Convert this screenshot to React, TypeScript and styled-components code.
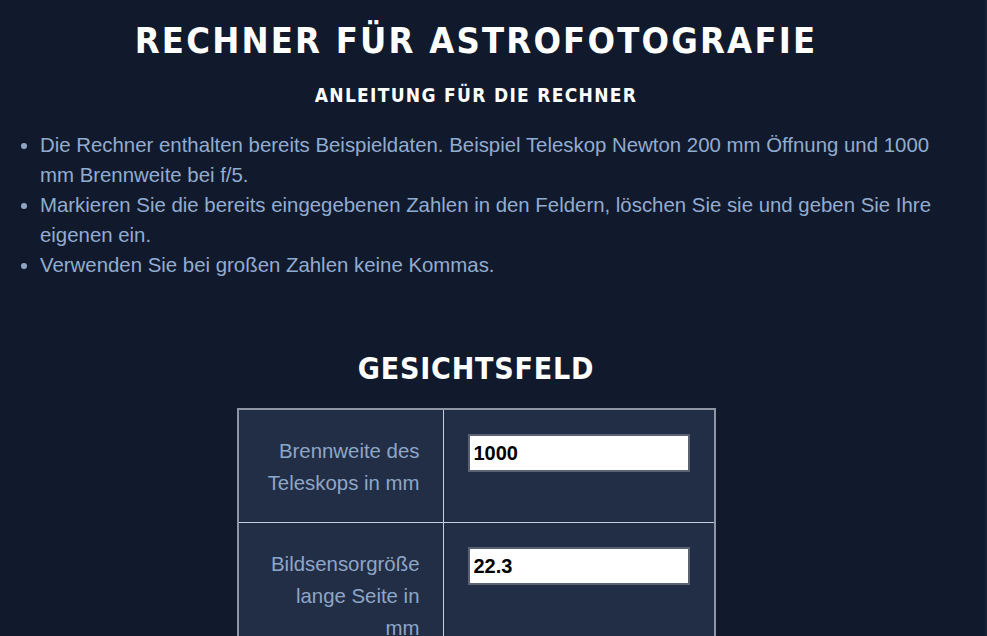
import styled, { createGlobalStyle } from 'styled-components';

const GlobalStyle = createGlobalStyle`
  html, body {
    margin: 0;
    padding: 0;
    background: #111a2c;
  }
  body {
    font-family: "Liberation Sans", Arial, sans-serif;
    overflow: hidden;
  }
`;

const rows = [
  { label: 'Brennweite des Teleskops in mm', value: '1000' },
  { label: 'Bildsensorgröße lange Seite in mm', value: '22.3' },
];

const App = () => {
  return (
    <Page>
      <GlobalStyle />
      <Content>
        <Title>Rechner für Astrofotografie</Title>
        <SubTitle>Anleitung für die Rechner</SubTitle>
        <Hints>
          <li>
            Die Rechner enthalten bereits Beispieldaten. Beispiel Teleskop Newton 200 mm Öffnung und 1000
            mm Brennweite bei f/5.
          </li>
          <li>
            Markieren Sie die bereits eingegebenen Zahlen in den Feldern, löschen Sie sie und geben Sie Ihre
            eigenen ein.
          </li>
          <li>Verwenden Sie bei großen Zahlen keine Kommas.</li>
        </Hints>
        <SectionTitle>Gesichtsfeld</SectionTitle>
        <CalcTable>
          <tbody>
            {rows.map((row) => (
              <tr key={row.label}>
                <LabelCell>{row.label}</LabelCell>
                <InputCell>
                  <NumberInput type="text" defaultValue={row.value} />
                </InputCell>
              </tr>
            ))}
          </tbody>
        </CalcTable>
      </Content>
    </Page>
  );
};

const Page = styled.div`
  height: 636px;
  background: #111a2c;
  border-right: 2px solid #16223a;
  box-sizing: border-box;
`;

const Content = styled.div`
  width: 952px;
  display: flex;
  flex-direction: column;
  align-items: center;
  padding-top: 20px;
`;

const Title = styled.h1`
  margin: 0;
  font-family: "DejaVu Sans Condensed", "DejaVu Sans", sans-serif;
  font-weight: bold;
  font-size: 36px;
  line-height: 42px;
  letter-spacing: 2.2px;
  text-transform: uppercase;
  color: #ffffff;
`;

const SubTitle = styled.h2`
  margin: 21px 0 0;
  font-family: "DejaVu Sans Condensed", "DejaVu Sans", sans-serif;
  font-weight: bold;
  font-size: 19px;
  line-height: 24px;
  letter-spacing: 1.3px;
  text-transform: uppercase;
  color: #ffffff;
`;

const Hints = styled.ul`
  align-self: stretch;
  margin: 23px 0 0;
  padding-left: 40px;
  font-size: 20.4px;
  line-height: 30px;
  color: #92acd0;

  li::marker {
    color: #8ea6c6;
  }
`;

const SectionTitle = styled.h3`
  margin: 71px 0 0;
  font-family: "DejaVu Sans Condensed", "DejaVu Sans", sans-serif;
  font-weight: bold;
  font-size: 30px;
  line-height: 36px;
  letter-spacing: 0.8px;
  text-transform: uppercase;
  color: #ffffff;
`;

const CalcTable = styled.table`
  margin-top: 21px;
  width: 479px;
  border-collapse: collapse;
  border: 2px solid #8e96a3;
  background: #222e45;
`;

const LabelCell = styled.td`
  width: 158px;
  padding: 25px 23px 23px 24px;
  border: 1px solid #c3cfdf;
  text-align: right;
  vertical-align: top;
  font-size: 20.4px;
  line-height: 32px;
  color: #8ea6c6;
`;

const InputCell = styled.td`
  padding: 24px 24px 24px;
  border: 1px solid #c3cfdf;
  vertical-align: top;
`;

const NumberInput = styled.input`
  display: block;
  width: 222px;
  height: 38px;
  box-sizing: border-box;
  padding: 0 4px;
  border: 2px solid #5b6372;
  background: #ffffff;
  font-family: "Liberation Sans", Arial, sans-serif;
  font-weight: bold;
  font-size: 20px;
  color: #000000;
  outline: none;
`;

export default App;
